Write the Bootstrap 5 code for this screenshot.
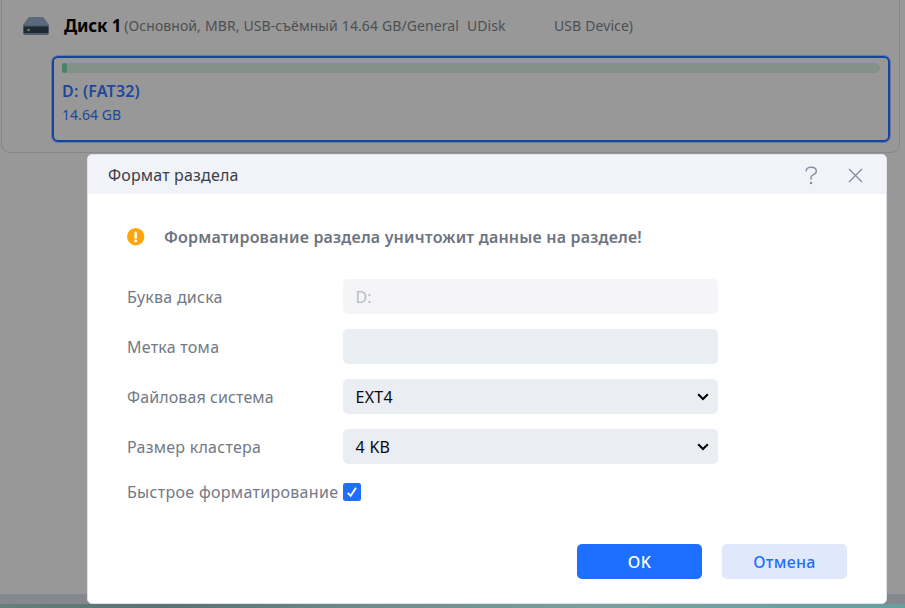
<!DOCTYPE html>
<html lang="ru">
<head>
<meta charset="utf-8">
<meta name="viewport" content="width=device-width, initial-scale=1">
<title>Формат раздела</title>
<link href="https://cdn.jsdelivr.net/npm/bootstrap@5.3.0/dist/css/bootstrap.min.css" rel="stylesheet">
<style>
body{width:905px;height:608px;font-family:"Noto Sans","Open Sans",sans-serif;background:#989898;color:#737985}
.disk-panel{width:899px;height:153px;margin-left:1px;border:1px solid #85868e;border-top:0;border-radius:0 0 9px 9px}
.disk-head{height:56px;padding:0 0 4px 20px}
.disk-name{font-size:17px;line-height:24px;color:#000;margin-left:14px;letter-spacing:-.15px}
.disk-info{font-size:14px;line-height:24px;color:#4d4f53;margin-left:3px;letter-spacing:.07px;word-spacing:.33px;white-space:pre}
.volume{width:838px;height:86px;margin-left:50px;border:2px solid #1445a2;border-radius:6px;box-shadow:0 0 0 1px rgba(20,69,162,.35);color:#1d479d;padding:5px 8px}
.usage{height:10px;border-radius:5px;background:#839188}
.usage-fill{width:5px;height:10px;background:#4a8369;border-radius:3px}
.vol-name{font-size:16px;line-height:24px;margin-top:6px;font-weight:600;letter-spacing:.2px}
.vol-size{font-size:14px;line-height:24px;letter-spacing:.05px}
.shell-foot{height:10px;background:#85888f}
.desk{height:4px;background:linear-gradient(90deg,#63807e,#587371 18%,#6d8b89 40%,#7aa09e 65%,#679f9f)}
.dlg{position:absolute;left:87px;top:154px;width:800px;height:450px;background:#fff;border:1px solid #dce1ea;border-radius:5px;overflow:hidden}
.dlg-head{height:39px;background:#f2f3f8;padding:0 18px 0 20px;color:#383e4b;font-size:16px}
.dlg-head .ttl{letter-spacing:.17px}
.dlg-body{padding:0 39px}
.warn{height:36px;margin-top:25px;margin-bottom:24px;font-size:16px;font-weight:600;color:#6d7480;letter-spacing:.19px}
.warn svg{margin-right:19px}
.line{height:35px;margin-bottom:15px;font-size:16px}
.line label,.quick label{width:216px;white-space:nowrap;letter-spacing:.25px}
.line label.tight{letter-spacing:.1px}
.field{width:375px;height:35px;border:0;border-radius:5px;background:#eaedf2;color:#08090b;padding:0 8px 0 12.5px}
.field.off{background:#f5f5f7;color:#b9bcc6}
.field span{letter-spacing:.3px}
.quick{height:26px;font-size:16px}
.quick label{letter-spacing:.3px}
.tick{width:18px;height:18px;border-radius:2.5px;background:#1e6fff}
.acts{gap:20px;margin-top:39px}
.acts .btn{width:125px;height:35px;border:0;border-radius:5px;font-size:16px;padding:0;font-weight:500;letter-spacing:.3px}
.go{background:#1e6fff;color:#fff}
.no{background:#e0e8fc;color:#1e6fff}
</style>
<script src="https://cdn.jsdelivr.net/npm/bootstrap@5.3.0/dist/js/bootstrap.bundle.min.js"></script>
</head>
<body class="position-relative overflow-hidden d-flex flex-column m-0">
<section class="disk-panel">
  <div class="disk-head d-flex align-items-center">
    <svg width="28" height="20" viewBox="0 0 28 20"><path d="M8 1h12q1 0 2 1l5 7v2H1V9l5-7q1-1 2-1z" fill="#5c697d"/><rect x="1" y="9" width="26" height="10" rx="2" fill="#515c6b"/><path d="M1.8 10.5h24.4V17H1.8z" fill="#202832"/><circle cx="6.5" cy="14" r="1.3" fill="#4c9155"/></svg>
    <span class="disk-name fw-bold">Диск 1</span>
    <span class="disk-info">(Основной, MBR, USB-съёмный 14.64 GB/General  UDisk            USB Device)</span>
  </div>
  <div class="volume">
    <div class="usage"><div class="usage-fill"></div></div>
    <div class="vol-name"><span>D: (FAT32)</span></div>
    <div class="vol-size"><span>14.64 GB</span></div>
  </div>
</section>
<div class="shell-foot mt-auto"></div>
<div class="desk"></div>

<div class="dlg" role="dialog">
  <div class="dlg-head d-flex align-items-center">
    <span class="ttl me-auto">Формат раздела</span>
    <svg width="14" height="20" viewBox="0 0 14 20" fill="none" stroke="#898ba3" stroke-width="1.4"><path d="M2.3 6.5V5.2Q2.7 2.3 7.3 2.3Q12.3 2.3 12.3 6.2Q12.3 8.4 9.5 9.6Q7 10.6 7 12.4v2.3"/><circle cx="7" cy="18" r="1.2" fill="#898ba3" stroke="none"/></svg>
    <svg class="ms-4" width="26" height="16" viewBox="0 0 26 16" fill="none" stroke="#898ba3" stroke-width="1.4"><path d="M7 2l13 13M20 2l-13 13"/></svg>
  </div>
  <div class="dlg-body">
    <div class="warn d-flex align-items-center">
      <svg width="18" height="18" viewBox="0 0 18 18"><circle cx="8.7" cy="8.7" r="8.7" fill="#ffa60a"/><path d="M8.7 4.7v4.8" stroke="#fff" stroke-width="2.4" stroke-linecap="round"/><circle cx="8.7" cy="12.9" r="1.4" fill="#fff"/></svg>
      <span>Форматирование раздела уничтожит данные на разделе!</span>
    </div>
    <div class="line d-flex align-items-center"><label>Буква диска</label><div class="field off d-flex align-items-center">D:</div></div>
    <div class="line d-flex align-items-center"><label>Метка тома</label><div class="field"></div></div>
    <div class="line d-flex align-items-center"><label class="tight">Файловая система</label><div class="field d-flex align-items-center justify-content-between"><span>EXT4</span><svg width="14" height="10" viewBox="0 0 14 10" fill="none" stroke="#000" stroke-width="2"><path d="M2.2 2.2L7 7l4.8-4.8"/></svg></div></div>
    <div class="line d-flex align-items-center"><label>Размер кластера</label><div class="field d-flex align-items-center justify-content-between"><span>4 KB</span><svg width="14" height="10" viewBox="0 0 14 10" fill="none" stroke="#000" stroke-width="2"><path d="M2.2 2.2L7 7l4.8-4.8"/></svg></div></div>
    <div class="quick d-flex align-items-center"><label>Быстрое форматирование</label><span class="tick d-flex"><svg width="18" height="18" viewBox="0 0 18 18" fill="none" stroke="#fff" stroke-width="1.9"><path d="M4.7 9.8l3 3L13 4.8"/></svg></span></div>
    <div class="acts d-flex justify-content-end"><button class="btn go">OK</button><button class="btn no">Отмена</button></div>
  </div>
</div>
</body>
</html>
